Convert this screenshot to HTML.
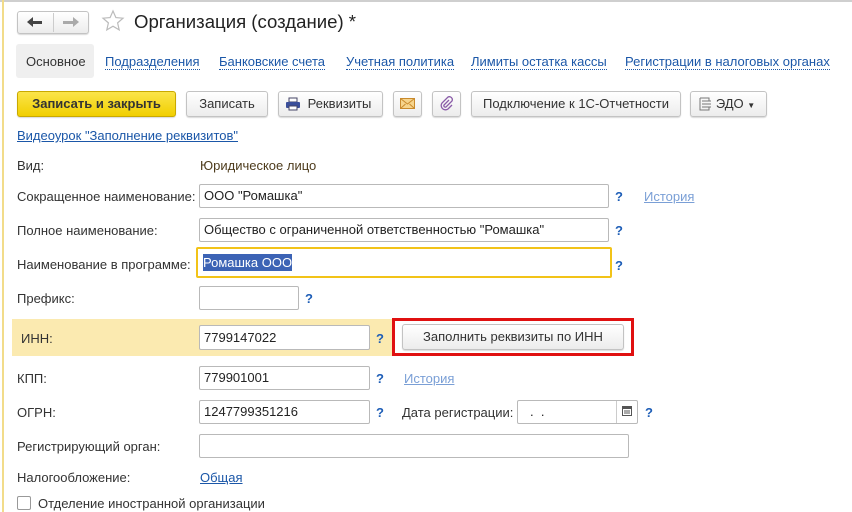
<!DOCTYPE html>
<html><head><meta charset="utf-8"><style>
*{box-sizing:border-box;margin:0;padding:0}
body{width:852px;height:512px;background:#fff;font-family:"Liberation Sans",Arial,sans-serif;font-size:13px;color:#333;position:relative;overflow:hidden}
.a{position:absolute;white-space:nowrap}
.lbl{position:absolute;white-space:nowrap;line-height:16px;margin-top:1px}
.inp{position:absolute;border:1px solid #b9b9b9;border-radius:2px;background:#fff;padding-left:4px;line-height:22px;color:#222}
.q{position:absolute;color:#1e5eb7;font-weight:bold;font-size:13px;margin-top:1px}
.lnk{position:absolute;color:#1b57a8;text-decoration:underline;white-space:nowrap;margin-top:1px}
.dot{position:absolute;color:#1b57a8;white-space:nowrap;border-bottom:1px dotted #1b57a8;line-height:14px}
.btn{position:absolute;border:1px solid #c3c3c3;border-radius:3px;background:linear-gradient(#fff,#ececec);height:26px;line-height:24px;text-align:center;color:#333;box-shadow:0 1px 1px rgba(0,0,0,.15)}
</style></head><body>
<div class="a" style="left:0;top:0;width:852px;height:2px;background:#cfcfcf"></div>
<div class="a" style="left:2px;top:0;width:2px;height:512px;background:#f2dc8a"></div>

<div class="btn" style="left:17px;top:11px;width:72px;height:23px;"></div>
<div class="a" style="left:53px;top:13px;width:1px;height:19px;background:#ccc"></div>
<div class="a" style="left:31px;top:21px;width:11px;height:3px;background:#444"></div>
<div class="a" style="left:27px;top:17px;width:0;height:0;border-right:6px solid #444;border-top:5px solid transparent;border-bottom:5px solid transparent"></div>
<div class="a" style="left:63px;top:21px;width:11px;height:3px;background:#aaa"></div>
<div class="a" style="left:73px;top:17px;width:0;height:0;border-left:6px solid #aaa;border-top:5px solid transparent;border-bottom:5px solid transparent"></div>
<svg class="a" style="left:101px;top:9px" width="24" height="24" viewBox="0 0 24 24"><path d="M12 2l2.9 6.6 7.1.6-5.4 4.7 1.6 7-6.2-3.7-6.2 3.7 1.6-7L2 9.2l7.1-.6z" fill="none" stroke="#bbb" stroke-width="1.2"/></svg>
<div class="a" style="left:134px;top:10px;font-size:18.6px;color:#222;line-height:24px">Организация (создание) *</div>

<div class="a" style="left:16px;top:44px;width:78px;height:34px;background:#efefef;border-radius:3px"></div>
<div class="a" style="left:26px;top:54px;line-height:16px;color:#333">Основное</div>
<div class="dot" style="left:105px;top:55px">Подразделения</div>
<div class="dot" style="left:219px;top:55px">Банковские счета</div>
<div class="dot" style="left:346px;top:55px">Учетная политика</div>
<div class="dot" style="left:471px;top:55px">Лимиты остатка кассы</div>
<div class="dot" style="left:625px;top:55px">Регистрации в налоговых органах</div>

<div class="btn" style="left:17px;top:91px;width:159px;background:linear-gradient(#fbe44a,#f1cf00);border-color:#c9a900;font-weight:bold;color:#333">Записать и закрыть</div>
<div class="btn" style="left:186px;top:91px;width:82px">Записать</div>
<div class="btn" style="left:278px;top:91px;width:105px;padding-left:18px">Реквизиты</div>
<svg class="a" style="left:285px;top:97px" width="16" height="14" viewBox="0 0 16 14"><rect x="4" y="1" width="8" height="4" fill="#fff" stroke="#446"/><rect x="1" y="5" width="14" height="6" rx="1" fill="#3b4f9a"/><rect x="4" y="9" width="8" height="4" fill="#fff" stroke="#446"/></svg>
<div class="btn" style="left:393px;top:91px;width:29px"></div>
<svg class="a" style="left:400px;top:98px" width="15" height="11" viewBox="0 0 15 11"><rect x=".5" y=".5" width="14" height="10" fill="#f6d48c" stroke="#c98a2c"/><path d="M.5 .5l7 5.5 7-5.5M.5 10.5l5-4.5M14.5 10.5l-5-4.5" fill="none" stroke="#c98a2c"/></svg>
<div class="btn" style="left:432px;top:91px;width:29px"></div>
<svg class="a" style="left:439px;top:96px" width="15" height="15" viewBox="0 0 15 15"><path d="M10 4l-5 5a1.5 1.5 0 0 0 2 2l6-6a3 3 0 0 0-4-4l-6 6a4.3 4.3 0 0 0 6 6l4-4" fill="none" stroke="#8a5ca8" stroke-width="1.3"/></svg>
<div class="btn" style="left:471px;top:91px;width:210px">Подключение к 1С-Отчетности</div>
<div class="btn" style="left:690px;top:91px;width:77px;padding-left:14px">ЭДО <span style="font-size:8px">▼</span></div>
<svg class="a" style="left:697px;top:96px" width="16" height="16" viewBox="0 0 16 16"><path d="M3 2h9v3M3 2v12h9v-3M5 5h9M5 8h9M5 11h9" fill="none" stroke="#777"/></svg>

<div class="lnk" style="left:17px;top:127px">Видеоурок "Заполнение реквизитов"</div>

<div class="lbl" style="left:17px;top:157px">Вид:</div>
<div class="lbl" style="left:200px;top:157px;color:#4d3b1c">Юридическое лицо</div>

<div class="lbl" style="left:17px;top:188px">Сокращенное наименование:</div>
<div class="inp" style="left:199px;top:184px;width:410px;height:24px">ООО "Ромашка"</div>
<div class="q" style="left:615px;top:188px">?</div>
<div class="lnk" style="left:644px;top:188px;color:#7a9fd6">История</div>

<div class="lbl" style="left:17px;top:222px">Полное наименование:</div>
<div class="inp" style="left:199px;top:218px;width:410px;height:24px">Общество с ограниченной ответственностью "Ромашка"</div>
<div class="q" style="left:615px;top:222px">?</div>

<div class="lbl" style="left:17px;top:256px">Наименование в программе:</div>
<div class="inp" style="left:196px;top:247px;width:416px;height:31px;border:2px solid #f2c318;padding-left:5px;line-height:28px"><span style="background:#3c63b5;color:#fff;padding:1px 0">Ромашка ООО</span></div>
<div class="q" style="left:615px;top:257px">?</div>

<div class="lbl" style="left:17px;top:290px">Префикс:</div>
<div class="inp" style="left:199px;top:286px;width:100px;height:24px"></div>
<div class="q" style="left:305px;top:290px">?</div>

<div class="a" style="left:12px;top:319px;width:381px;height:37px;background:#fbeab0"></div>
<div class="lbl" style="left:21px;top:330px">ИНН:</div>
<div class="inp" style="left:199px;top:325px;width:171px;height:25px;line-height:23px">7799147022</div>
<div class="q" style="left:376px;top:330px">?</div>
<div class="a" style="left:392px;top:318px;width:242px;height:38px;border:3px solid #e01010"></div>
<div class="btn" style="left:402px;top:324px;width:222px;height:26px">Заполнить реквизиты по ИНН</div>

<div class="lbl" style="left:17px;top:370px">КПП:</div>
<div class="inp" style="left:199px;top:366px;width:171px;height:24px">779901001</div>
<div class="q" style="left:376px;top:370px">?</div>
<div class="lnk" style="left:404px;top:370px;color:#7a9fd6">История</div>

<div class="lbl" style="left:17px;top:404px">ОГРН:</div>
<div class="inp" style="left:199px;top:400px;width:171px;height:24px">1247799351216</div>
<div class="q" style="left:376px;top:404px">?</div>
<div class="lbl" style="left:402px;top:404px">Дата регистрации:</div>
<div class="inp" style="left:517px;top:400px;width:121px;height:24px;padding-left:12px">. &nbsp;.</div>
<div class="a" style="left:616px;top:401px;width:1px;height:22px;background:#ccc"></div>
<svg class="a" style="left:622px;top:405px" width="10" height="11" viewBox="0 0 10 11"><rect x=".5" y="1.5" width="9" height="9" fill="none" stroke="#555"/><rect x="0" y="1" width="10" height="3" fill="#555"/><path d="M2 6h6M2 8h6" stroke="#555"/></svg>
<div class="q" style="left:645px;top:404px">?</div>

<div class="lbl" style="left:17px;top:438px">Регистрирующий орган:</div>
<div class="inp" style="left:199px;top:434px;width:430px;height:24px"></div>

<div class="lbl" style="left:17px;top:469px">Налогообложение:</div>
<div class="lnk" style="left:200px;top:469px">Общая</div>

<div class="a" style="left:17px;top:496px;width:14px;height:14px;border:1px solid #999;border-radius:2px;background:#fff"></div>
<div class="lbl" style="left:38px;top:495px">Отделение иностранной организации</div>
</body></html>
